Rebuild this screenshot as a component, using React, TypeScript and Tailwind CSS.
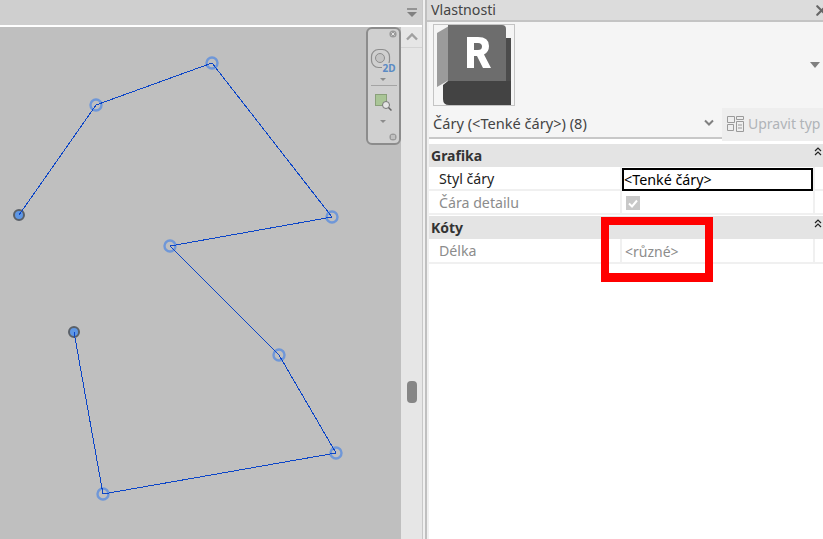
import { X } from "lucide-react";

const points: [number, number][] = [
  [19, 215],
  [96, 105],
  [212, 63],
  [332, 217],
  [170, 246],
  [279, 355],
  [336, 453],
  [103, 494],
  [74, 332],
];

const LineCanvas = () => (
  <svg width="401" height="512" viewBox="0 27 401 512" className="block">
    {points.map(([x, y], i) =>
      i === 0 || i === points.length - 1 ? (
        <circle key={i} cx={x} cy={y} r="5" fill="#5f97e4" stroke="#5a6068" strokeWidth="2" />
      ) : (
        <circle key={i} cx={x} cy={y} r="5.5" fill="none" stroke="#6f97d8" strokeWidth="2.4" />
      ),
    )}
    <polyline
      points={points.map((p) => p.join(",")).join(" ")}
      fill="none"
      stroke="#0b45c8"
      strokeWidth="1"
      shapeRendering="crispEdges"
    />
  </svg>
);

const NavBar = () => (
  <div className="absolute left-[366px] top-[27px] flex h-[118px] w-[35px] flex-col items-center rounded-[6px] border-2 border-[#8c8c8c] bg-[#d0d0d0]">
    <svg width="31" height="114" viewBox="0 0 31 114" className="block">
      <circle cx="25" cy="5" r="3.6" fill="#9a9a9a" />
      <path d="M23.5 3.5l3 3M26.5 3.5l-3 3" stroke="#e6e6e6" strokeWidth="1" />
      <rect x="3.5" y="20.5" width="18" height="18" rx="7" fill="none" stroke="#8d8d8d" strokeWidth="1.2" />
      <circle cx="12" cy="29" r="4.5" fill="#c4c4c4" stroke="#8d8d8d" />
      <rect x="14" y="34" width="15" height="10" fill="#d0d0d0" />
      <text x="14.5" y="43" fontSize="10" fontWeight="700" fill="#5a8ac4" fontFamily="'Noto Sans', sans-serif">2D</text>
      <path d="M12 49h6l-3 3z" fill="#8c8c8c" />
      <path d="M3 56.5h26" stroke="#a4a4a4" />
      <rect x="7.5" y="65.5" width="11" height="11" fill="#a9c596" stroke="#8aa07a" />
      <circle cx="18" cy="76" r="3.5" fill="#e4e4e4" stroke="#777" />
      <path d="M20.5 78.5l3 3" stroke="#666" strokeWidth="1.5" />
      <path d="M12 91h6l-3 3z" fill="#8c8c8c" />
      <circle cx="25" cy="108" r="3.6" fill="#9a9a9a" />
      <path d="M23 107h4M23 109h4" stroke="#e6e6e6" />
    </svg>
  </div>
);

const RevitLogo = () => (
  <svg width="74" height="80" viewBox="0 0 74 80" className="block">
    <path d="M0 8 L12 1 V55 L0 62 Z" fill="#9b9b9b" />
    <rect x="69" y="13" width="5" height="67" fill="#4b4b4b" />
    <path d="M6 60 L11 56 H74 V80 H12 Q6 80 6 74 Z" fill="#434343" />
    <path d="M11 0 H65 Q69 0 69 4 V56 H11 Z" fill="#6d6d6d" />
    <path
      d="M30 12 V43 H37 V31 H40 L46 43 H54 L47 29.5 Q52 27 52 21 Q52 12 41 12 Z M37 18 H41 Q45 18 45 21.5 Q45 25 41 25 H37 Z"
      fill="#ffffff"
      fillRule="evenodd"
    />
  </svg>
);

const SectionHeader = ({ title }: { title: string }) => (
  <div className="flex h-[23px] shrink-0 items-center justify-between bg-[#e4e4e4] pl-[2px] pr-[1px] text-[14px] font-bold leading-none text-[#333333]">
    <span>{title}</span>
    <svg width="8" height="9" viewBox="0 0 8 9" className="mb-2">
      <path d="M1 4l3-3 3 3M1 8l3-3 3 3" fill="none" stroke="#222" strokeWidth="1.2" />
    </svg>
  </div>
);

const PropRow = ({ label, muted, last, children }: { label: string; muted?: boolean; last?: boolean; children?: React.ReactNode }) => (
  <div className={`flex shrink-0 border-b-2 border-[#f0f0f0] text-[14.2px] leading-none ${last ? "h-[25px]" : "h-6"}`}>
    <div className={`flex w-[193px] items-center border-r-2 border-[#f0f0f0] pl-[10px] pt-[2px] ${muted ? "text-[#8c8c8c]" : "text-[#222222]"}`}>
      {label}
    </div>
    <div className="flex w-[191px] items-center pt-[2px]">{children}</div>
    <div className="w-[10px] border-l-2 border-[#f0f0f0]" />
  </div>
);

const PropertiesPanel = () => (
  <div className="flex h-full w-[394px] flex-col bg-white">
    <div className="-ml-[2px] flex h-[22px] shrink-0 items-center justify-between border-b-2 border-[#c4c4c4] bg-[#dcdcdc] pl-[4px] text-[14.2px] leading-none text-[#444444]">
      <span>Vlastnosti</span>
      <X size={17} strokeWidth={3} color="#666666" className="-mr-[7px]" />
    </div>
    <div className="flex h-[86px] shrink-0 items-center justify-between bg-[#f5f5f5] pl-[4px] pr-[3px]">
      <div className="flex h-[82px] w-[82px] items-center border border-[#c4c4c4] bg-[#f5f5f5] pl-[3px]">
        <RevitLogo />
      </div>
      <div className="h-0 w-0 border-x-[5px] border-t-[6px] border-x-transparent border-t-[#808080]" />
    </div>
    <div className="flex h-[33px] shrink-0">
      <div className="flex h-[31px] w-[293px] items-center justify-between border-b-2 border-[#c8c8c8] bg-[#f5f5f5] pl-[4px] pr-[8px] pt-[2px] text-[14.6px] leading-none text-[#444444]">
        <span>Čáry (&lt;Tenké čáry&gt;) (8)</span>
        <svg width="10" height="7" viewBox="0 0 10 7" className="-mt-[2px]">
          <path d="M1 1.5l4 4 4-4" fill="none" stroke="#808080" strokeWidth="2" />
        </svg>
      </div>
      <div className="flex flex-1 items-center gap-[4px] bg-[#eeeeee] pb-[2px] pl-[5px] text-[14px] leading-none text-[#b0b4b8]">
        <svg width="17" height="17" viewBox="0 0 17 17" fill="none" stroke="#9a9a9a">
          <path d="M.5 1.5h7v6h-7zM.5 9.5h6v6h-6zM9.5 1.5h7v3h-7zM9.5 6.5h7v10h-7zM11 10h4M11 13h4" />
        </svg>
        <span>Upravit typ</span>
      </div>
    </div>
    <div className="h-[3px] shrink-0" />
    <SectionHeader title="Grafika" />
    <PropRow label="Styl čáry">
      <div className="-mt-[1px] flex h-[23px] w-full items-center self-start border-2 border-black pt-[1px] text-[14.3px] leading-none text-black">
        &lt;Tenké čáry&gt;
      </div>
    </PropRow>
    <PropRow label="Čára detailu" muted>
      <div className="ml-[4px] flex h-[14px] w-[14px] items-center justify-center bg-[#c8c8c8]">
        <svg width="10" height="9" viewBox="0 0 10 9">
          <path d="M1 4.5l3 3 5-6" fill="none" stroke="#ffffff" strokeWidth="2" />
        </svg>
      </div>
    </PropRow>
    <div className="h-px shrink-0" />
    <SectionHeader title="Kóty" />
    <PropRow label="Délka" muted last>
      <span className="pl-[3px] text-[14px] text-[#8c8c8c]">&lt;různé&gt;</span>
    </PropRow>
  </div>
);

export default function App() {
  return (
    <div className="relative flex h-[539px] w-[823px] overflow-hidden bg-white font-['Noto_Sans',sans-serif]">
      <div className="flex w-[401px] shrink-0 flex-col">
        <div className="h-[25px] bg-[#cfcfcf]" />
        <div className="h-[2px] bg-white" />
        <div className="flex-1 bg-[#bfbfbf]">
          <LineCanvas />
        </div>
      </div>
      <div className="flex w-[21px] shrink-0 flex-col bg-[#e6e6e6]">
        <div className="flex h-[25px] items-center justify-center bg-[#cfcfcf]">
          <svg width="12" height="10" viewBox="0 0 12 10">
            <path d="M1 1h10" stroke="#808080" strokeWidth="1.5" />
            <path d="M1 4h10L6 9z" fill="#808080" />
          </svg>
        </div>
        <div className="h-[2px] bg-white" />
        <div className="flex h-[21px] items-center justify-center border-b border-[#d4d4d4]">
          <svg width="12" height="8" viewBox="0 0 12 8">
            <path d="M1 6.5l5-5 5 5" fill="none" stroke="#a0a0a0" strokeWidth="2.4" />
          </svg>
        </div>
        <div className="flex flex-1 justify-center pt-[333px]">
          <div className="h-[22px] w-[10px] rounded-[4px] bg-[#868686]" />
        </div>
      </div>
      <div className="w-[1px] shrink-0 bg-[#c8c8c8]" />
      <div className="w-[2px] shrink-0 bg-[#f0f0f0]" />
      <div className="w-[2px] shrink-0 bg-[#c0c0c0]" />
      <div className="w-[2px] shrink-0 bg-[#f0f0f0]" />
      <PropertiesPanel />
      <NavBar />
      <div className="absolute left-[601px] top-[217px] h-[65px] w-[112px] border-[8px] border-b-[9px] border-[#ff0000]" />
    </div>
  );
}
